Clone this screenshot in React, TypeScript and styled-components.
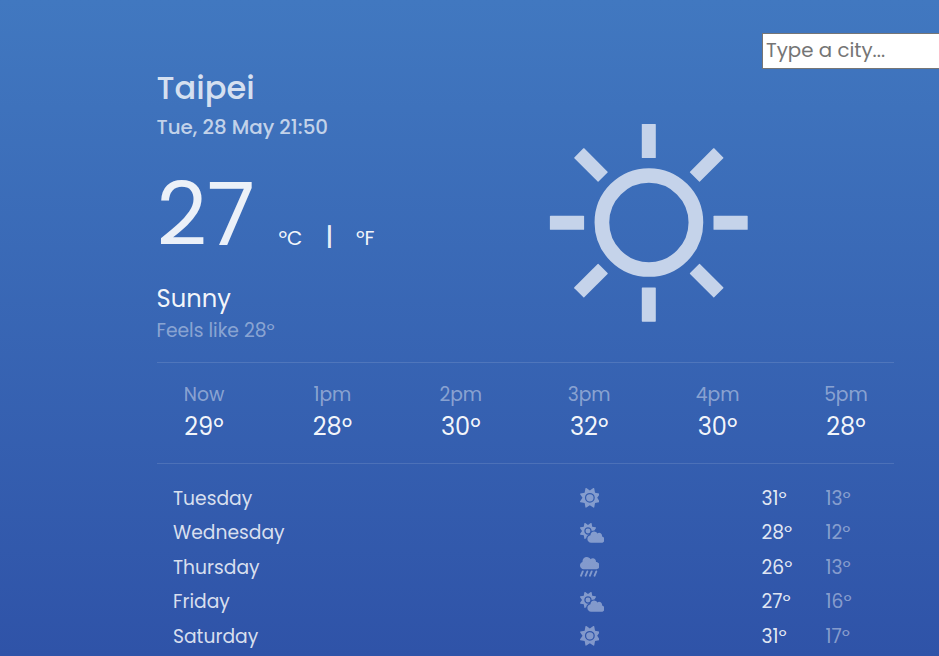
import React from 'react';
import styled, { createGlobalStyle } from 'styled-components';
import { FaSun, FaCloudSun, FaCloudShowersHeavy } from 'react-icons/fa6';

const GlobalStyle = createGlobalStyle`
  * { box-sizing: border-box; }
  body { margin: 0; overflow: hidden; font-family: Poppins, Inter, sans-serif; }
`;

const Page = styled.div`
  height: 656px;
  overflow: hidden;
  color: #fff;
  background: linear-gradient(180deg, #4178c0 0%, #2f53a8 100%);
`;

const Header = styled.header`
  display: flex;
  height: 68px;
  padding: 33px 0 0 762px;
`;

const SearchInput = styled.input`
  flex: none;
  width: 250px;
  height: 36px;
  padding: 0 3px 2px;
  border: 1px solid #767676;
  background: #fff;
  font-family: inherit;
  font-size: 19.8px;
  color: #222;
  &::placeholder { color: #757575; opacity: 1; }
`;

const Container = styled.main`
  width: 737px;
  margin-left: 156.5px;
`;

const Current = styled.section`
  display: flex;
  height: 294px;
`;

const Info = styled.div`
  width: 392.5px;
`;

const City = styled.h1`
  margin: 0;
  font-size: 32px;
  font-weight: 500;
  line-height: 40px;
  color: rgba(255, 255, 255, 0.8);
`;

const DateLine = styled.p`
  margin: 4px 0 29px;
  font-size: 19.85px;
  font-weight: 500;
  line-height: 30px;
  color: rgba(255, 255, 255, 0.7);
`;

const Temperature = styled.div`
  display: flex;
  align-items: baseline;
  height: 88px;
  white-space: pre;
`;

const Degrees = styled.span`
  width: 122px;
  font-size: 88px;
  line-height: 88px;
  color: rgba(255, 255, 255, 0.9);
`;

const Unit = styled.span<{ $width?: number }>`
  width: ${(p) => (p.$width ? `${p.$width}px` : 'auto')};
  font-size: 19.8px;
  line-height: 28px;
  color: rgba(255, 255, 255, 0.95);
`;

const Separator = styled.span`
  width: 30.5px;
  font-size: 24px;
  font-weight: 500;
  line-height: 28px;
  color: rgba(255, 255, 255, 0.9);
`;

const Condition = styled.div`
  margin-top: 25px;
  font-size: 24.2px;
  line-height: 30px;
  color: rgba(255, 255, 255, 0.95);
`;

const FeelsLike = styled.div`
  margin-top: 3px;
  font-size: 18.72px;
  line-height: 28px;
  color: rgba(255, 255, 255, 0.43);
`;

const BigSun = styled.svg`
  width: 200px;
  height: 200px;
  margin-top: 55px;
  color: #c5d3ea;
`;

const Hours = styled.section`
  display: flex;
  justify-content: space-between;
  height: 102px;
  padding: 18px 0 21px;
  border-top: 1px solid rgba(255, 255, 255, 0.12);
  border-bottom: 1px solid rgba(255, 255, 255, 0.12);
`;

const Hour = styled.div`
  width: 95px;
  text-align: center;
`;

const HourLabel = styled.div`
  font-size: 18.72px;
  line-height: 28px;
  color: rgba(255, 255, 255, 0.43);
`;

const HourTemp = styled.div`
  margin-top: 3px;
  font-size: 24px;
  line-height: 30px;
  color: rgba(255, 255, 255, 0.95);
`;

const Days = styled.section`
  padding: 17.5px 0 0 16.5px;
`;

const Day = styled.div`
  display: grid;
  grid-template-columns: 406.5px 182px 64px 1fr;
  height: 34.5px;
  font-size: 18.72px;
  line-height: 34.5px;
  color: rgba(255, 255, 255, 0.82);
`;

const DayIcon = styled.span<{ $wide: boolean }>`
  display: flex;
  align-items: center;
  color: rgba(255, 255, 255, 0.4);
  svg {
    width: ${(p) => (p.$wide ? 24.6 : 19.7)}px;
    height: 19.7px;
    margin-top: -1px;
  }
`;

const High = styled.span`
  color: rgba(255, 255, 255, 0.87);
`;

const Low = styled.span`
  color: rgba(255, 255, 255, 0.43);
`;

const hours = [
  ['Now', 29], ['1pm', 28], ['2pm', 30], ['3pm', 32], ['4pm', 30], ['5pm', 28],
] as const;

const days = [
  { name: 'Tuesday', Icon: FaSun, high: 31, low: 13 },
  { name: 'Wednesday', Icon: FaCloudSun, high: 28, low: 12 },
  { name: 'Thursday', Icon: FaCloudShowersHeavy, high: 26, low: 13 },
  { name: 'Friday', Icon: FaCloudSun, high: 27, low: 16 },
  { name: 'Saturday', Icon: FaSun, high: 31, low: 17 },
];

const rays = [0, 45, 90, 135, 180, 225, 270, 315];

export default function App() {
  return (
    <Page>
      <GlobalStyle />
      <Header>
        <SearchInput placeholder="Type a city..." />
      </Header>
      <Container>
        <Current>
          <Info>
            <City>Taipei</City>
            <DateLine>Tue, 28 May 21:50</DateLine>
            <Temperature>
              <Degrees>27</Degrees>
              <Unit $width={47}>ºC</Unit>
              <Separator>|</Separator>
              <Unit>ºF</Unit>
            </Temperature>
            <Condition>Sunny</Condition>
            <FeelsLike>Feels like 28º</FeelsLike>
          </Info>
          <BigSun viewBox="0 0 200 200">
            <circle cx="99.9" cy="99.5" r="47" fill="none" stroke="currentColor" strokeWidth="14.7" />
            {rays.map((angle) => (
              <rect
                key={angle}
                x="92.8"
                y="0.9"
                width="14"
                height="34.2"
                rx="0.6"
                fill="currentColor"
                transform={`rotate(${angle} 99.8 99.8)`}
              />
            ))}
          </BigSun>
        </Current>
        <Hours>
          {hours.map(([label, temp]) => (
            <Hour key={label}>
              <HourLabel>{label}</HourLabel>
              <HourTemp>{temp}º</HourTemp>
            </Hour>
          ))}
        </Hours>
        <Days>
          {days.map(({ name, Icon, high, low }) => (
            <Day key={name}>
              <span>{name}</span>
              <DayIcon $wide={Icon === FaCloudSun}><Icon /></DayIcon>
              <High>{high}º</High>
              <Low>{low}º</Low>
            </Day>
          ))}
        </Days>
      </Container>
    </Page>
  );
}
